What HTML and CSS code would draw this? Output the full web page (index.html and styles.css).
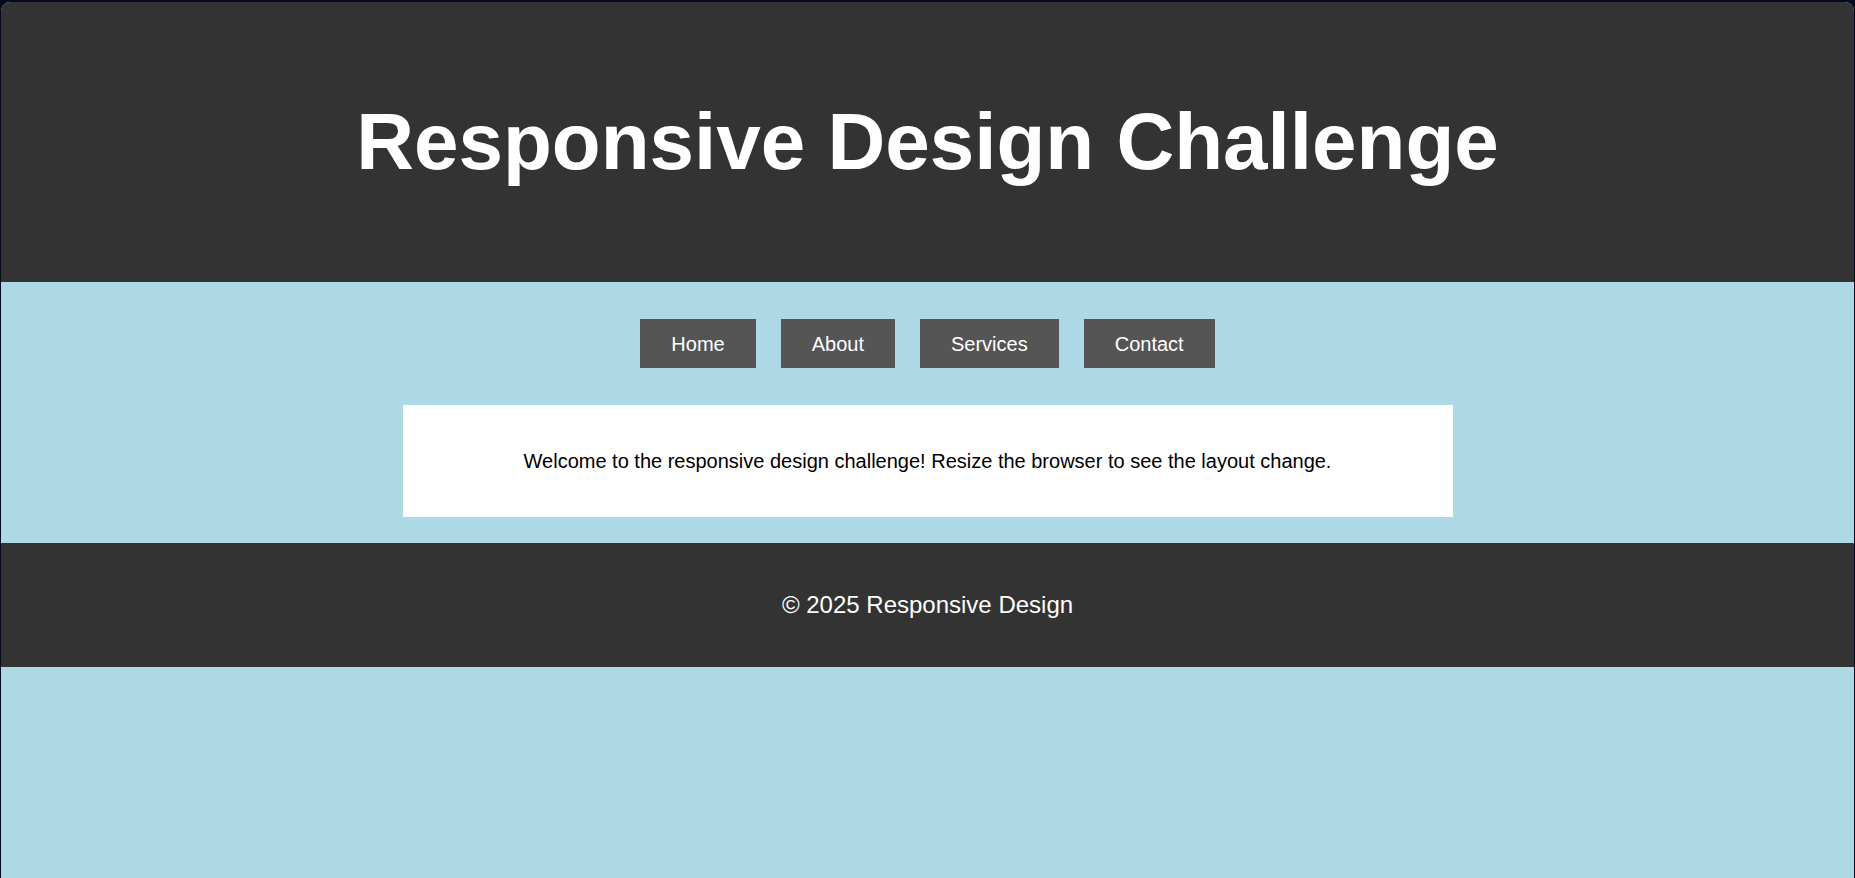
FILE: index.html
```html
<!DOCTYPE html>
<html lang="en">
<head>
<meta charset="utf-8">
<title>Responsive Design Challenge</title>
<link rel="stylesheet" href="styles.css">
</head>
<body>
<div class="window">
  <header class="site-header">
    <h1 class="title">Responsive Design Challenge</h1>
  </header>
  <nav class="site-nav">
    <a class="nav-link" href="#">Home</a>
    <a class="nav-link" href="#">About</a>
    <a class="nav-link" href="#">Services</a>
    <a class="nav-link" href="#">Contact</a>
  </nav>
  <main class="content">
    <p class="content-text">Welcome to the responsive design challenge! Resize the browser to see the layout change.</p>
  </main>
  <footer class="site-footer">
    <p class="footer-text">&copy; 2025 Responsive Design</p>
  </footer>
</div>
</body>
</html>
```

FILE: styles.css
```css
html, body {
  margin: 0;
  padding: 0;
  height: 100%;
}

body {
  background: #050a1d;
  font-family: "Liberation Sans", Arial, sans-serif;
  overflow: hidden;
}

.window {
  margin: 2px 1px 0 1px;
  height: calc(100% - 2px);
  background: #add8e6;
  border-radius: 9px 9px 0 0;
  overflow: hidden;
  display: flex;
  flex-direction: column;
}

.site-header {
  background: #333333;
  color: #ffffff;
  text-align: center;
  padding: 40px 0;
  height: 280px;
  box-sizing: border-box;
}

.title {
  margin: 54px 0;
  font-size: 80px;
  font-weight: bold;
  line-height: 92px;
}

.site-nav {
  display: flex;
  justify-content: center;
  gap: 25px;
  padding: 37px 0;
}

.nav-link {
  display: block;
  background: #555555;
  color: #ffffff;
  text-decoration: none;
  font-size: 20px;
  line-height: 23px;
  padding: 14px 31px 12px;
}

.content {
  align-self: center;
  width: 1050px;
  box-sizing: border-box;
  background: #ffffff;
  padding: 25px;
  margin-bottom: 26px;
  text-align: center;
}

.content-text {
  margin: 20px 0;
  font-size: 20px;
  line-height: 22px;
  color: #000000;
}

.site-footer {
  background: #333333;
  color: #ffffff;
  text-align: center;
  padding: 24px 0;
}

.footer-text {
  margin: 24px 0;
  font-size: 24px;
  line-height: 28px;
}
```
